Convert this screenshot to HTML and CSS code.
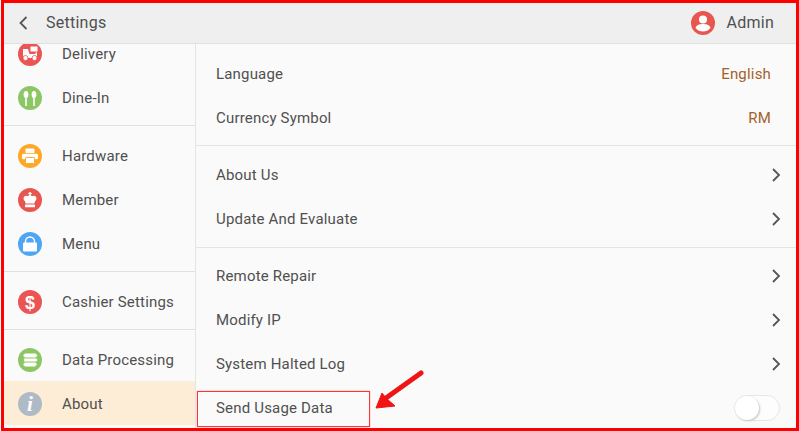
FILE: index.html

```html
<!DOCTYPE html>
<html lang="en">
<head>
    <meta charset="UTF-8">
    <meta name="viewport" content="width=device-width, initial-scale=1.0">
    <title>Settings</title>
    <link rel="stylesheet" href="styles.css">
</head>
<body>
    <div class="app">
        <header class="topbar">
            <svg class="back" width="12" height="16" viewBox="0 0 12 16"><path d="M9.5 2 L3.5 8 L9.5 14" fill="none" stroke="#555" stroke-width="1.8"/></svg>
            <span class="title">Settings</span>
            <svg class="user" width="24" height="24" viewBox="0 0 24 24">
                <circle cx="12" cy="12" r="12" fill="#e8574f"/>
                <circle cx="12" cy="8.5" r="4" fill="#fff"/>
                <path d="M4.5 17 C5.5 13.5 9 13 12 13 C15 13 18.5 13.5 19.5 17 C17.5 19.5 15 20.5 12 20.5 C9 20.5 6.5 19.5 4.5 17 Z" fill="#fff"/>
            </svg>
            <span class="username">Admin</span>
        </header>

        <div class="columns">
            <nav class="sidebar">
                <div class="nav-scroll">
                    <div class="nav-group first">
                        <div class="nav-row">
                            <svg class="icon" viewBox="0 0 24 24"><circle cx="12" cy="12" r="12" fill="#ea5455"/><rect x="12.500" y="4.500" width="7" height="5" fill="#fff"/><path d="M5 7 h5 l1.500 5 h6 V10.500 h1.500 V16 H5 Z" fill="#fff"/><circle cx="7.500" cy="16" r="2.500" fill="#fff" stroke="#ea5455" stroke-width="0.800"/><circle cx="16.500" cy="16" r="2.500" fill="#fff" stroke="#ea5455" stroke-width="0.800"/></svg>
                            <span>Delivery</span>
                        </div>
                        <div class="nav-row">
                            <svg class="icon" viewBox="0 0 24 24"><circle cx="12" cy="12" r="12" fill="#8cc665"/><ellipse cx="8" cy="8.500" rx="2.400" ry="3.500" fill="#fff"/><rect x="7.200" y="10" width="1.600" height="10" fill="#fff"/><ellipse cx="16" cy="8.500" rx="2.400" ry="3.500" fill="#fff"/><rect x="15.200" y="10" width="1.600" height="10" fill="#fff"/></svg>
                            <span>Dine-In</span>
                        </div>
                    </div>
                    <div class="nav-group">
                        <div class="nav-row">
                            <svg class="icon" viewBox="0 0 24 24"><circle cx="12" cy="12" r="12" fill="#ffa726"/><rect x="7.500" y="4.500" width="9" height="4.500" rx="0.800" fill="#fff"/><rect x="4" y="9.800" width="16" height="5.500" rx="1.500" fill="#fff"/><rect x="7.500" y="13.500" width="9" height="6" rx="0.800" fill="#fff" stroke="#ffa726" stroke-width="1"/></svg>
                            <span>Hardware</span>
                        </div>
                        <div class="nav-row">
                            <svg class="icon" viewBox="0 0 24 24"><circle cx="12" cy="12" r="12" fill="#e8574f"/><rect x="11.300" y="4" width="1.400" height="4" fill="#fff"/><rect x="10.200" y="4.900" width="3.600" height="1.200" fill="#fff"/><circle cx="8.300" cy="10.500" r="2.700" fill="#fff"/><circle cx="15.700" cy="10.500" r="2.700" fill="#fff"/><circle cx="12" cy="9.800" r="2.500" fill="#fff"/><path d="M6.500 11.500 H17.500 L16.300 15.500 H7.700 Z" fill="#fff"/><rect x="7" y="16.500" width="10" height="2.800" rx="0.500" fill="#fff"/></svg>
                            <span>Member</span>
                        </div>
                        <div class="nav-row">
                            <svg class="icon" viewBox="0 0 24 24"><circle cx="12" cy="12" r="12" fill="#4fa5f2"/><rect x="5" y="10.500" width="14" height="9" rx="1.200" fill="#fff"/><path d="M7.500 11 V9.500 a4.500 4.500 0 0 1 9 0 V11" fill="none" stroke="#fff" stroke-width="1.400"/></svg>
                            <span>Menu</span>
                        </div>
                    </div>
                    <div class="nav-group">
                        <div class="nav-row">
                            <svg class="icon" viewBox="0 0 24 24"><circle cx="12" cy="12" r="12" fill="#ea5455"/><text x="12" y="18.500" class="icon-char">$</text></svg>
                            <span>Cashier Settings</span>
                        </div>
                    </div>
                    <div class="nav-group last">
                        <div class="nav-row">
                            <svg class="icon" viewBox="0 0 24 24"><circle cx="12" cy="12" r="12" fill="#8cc665"/><path d="M7 5.500 H17.500 L19.500 7.500 L17.500 9.500 H7 L5 7.500 Z M5.500 10.500 H18.500 L19.500 12 L18.500 13.500 H5.500 L6.500 12 Z M7 14.500 H17.500 L19 16.500 L17 18.500 H7 L5 16.500 Z" fill="#fff"/></svg>
                            <span>Data Processing</span>
                        </div>
                        <div class="nav-row active">
                            <svg class="icon" viewBox="0 0 24 24"><circle cx="12" cy="12" r="12" fill="#aebbc6"/><text x="12" y="19" class="icon-info">i</text></svg>
                            <span>About</span>
                        </div>
                    </div>
                </div>
            </nav>

            <main class="panel">
                <section class="group">
                    <div class="row"><span>Language</span><span class="value">English</span></div>
                    <div class="row"><span>Currency Symbol</span><span class="value">RM</span></div>
                </section>
                <section class="group">
                    <div class="row"><span>About Us</span><svg class="chev" viewBox="0 0 10 16"><path d="M2 2 L8 8 L2 14" /></svg></div>
                    <div class="row"><span>Update And Evaluate</span><svg class="chev" viewBox="0 0 10 16"><path d="M2 2 L8 8 L2 14" /></svg></div>
                </section>
                <section class="group">
                    <div class="row"><span>Remote Repair</span><svg class="chev" viewBox="0 0 10 16"><path d="M2 2 L8 8 L2 14" /></svg></div>
                    <div class="row"><span>Modify IP</span><svg class="chev" viewBox="0 0 10 16"><path d="M2 2 L8 8 L2 14" /></svg></div>
                    <div class="row"><span>System Halted Log</span><svg class="chev" viewBox="0 0 10 16"><path d="M2 2 L8 8 L2 14" /></svg></div>
                    <div class="row"><span>Send Usage Data</span><span class="toggle"><span class="knob"></span></span></div>
                </section>
            </main>
        </div>
    </div>

    <!-- annotations on top of the screenshot -->
    <div class="frame"></div>
    <div class="callout"></div>
    <svg class="arrow" width="56" height="50" viewBox="0 0 56 50"><path d="M50 8 L15 33" fill="none" stroke="#f01414" stroke-width="5" stroke-linecap="round"/><path d="M5 43 L11 28 L15 33 L24 41 Z" fill="#f01414" stroke="#f01414" stroke-width="1" stroke-linejoin="round"/></svg>
</body>
</html>
```

FILE: styles.css

```css
body {
    margin: 0;
    width: 799px;
    height: 431px;
    overflow: hidden;
    position: relative;
    background-color: #fff;
    font-family: 'Roboto', sans-serif;
    font-size: 15px;
    letter-spacing: 0.18px;
    color: #505050;
}

.app {
    margin: 3px 3px 0 3px;
    height: 425px;
    width: 793px;
    overflow: hidden;
    background-color: #fafafa;
}

.topbar {
    display: flex;
    align-items: center;
    height: 39px;
    padding-right: 22px;
    padding-bottom: 1px;
    background-color: #efefef;
    border-bottom: 1.5px solid #e0e0e0;
}

.back {
    margin-left: 14px;
}

.title {
    margin-left: 17px;
    font-size: 16px;
    letter-spacing: 0.25px;
    flex: 1;
}

.user {
    margin-right: 12px;
}

.username {
    font-size: 16px;
    letter-spacing: 0.25px;
}

.columns {
    display: flex;
    height: 384px;
}

.sidebar {
    width: 192px;
    flex-shrink: 0;
    overflow: hidden;
    border-right: 1.5px solid #e4e4e4;
}

.nav-scroll {
    margin-top: -12px;
}

.nav-group {
    padding: 8px 0 5px;
    border-bottom: 1.5px solid #e0e0e0;
}

.nav-group.first {
    padding-top: 0;
}

.nav-group.last {
    border-bottom: none;
}

.nav-row {
    display: flex;
    align-items: center;
    height: 44px;
    padding-left: 15px;
}

.nav-row.active {
    box-sizing: border-box;
    margin-top: -1px;
    padding-top: 2px;
    background-color: #fdecd6;
}

.icon {
    width: 24px;
    height: 24px;
    margin-right: 20px;
}

.icon-char {
    font-family: 'Liberation Sans', sans-serif;
    font-size: 18px;
    font-weight: bold;
    fill: #fff;
    text-anchor: middle;
}

.icon-info {
    font-family: 'Liberation Serif', serif;
    font-size: 21px;
    font-weight: bold;
    font-style: italic;
    fill: #fff;
    text-anchor: middle;
}

.panel {
    flex: 1;
    overflow: hidden;
}

.group {
    padding: 8px 0 5px;
    border-bottom: 1.5px solid #e4e4e4;
}

.group:nth-child(2) {
    padding: 7px 0 6px;
}

.group:last-child {
    padding-top: 6px;
    border-bottom: none;
}

.row {
    display: flex;
    align-items: center;
    justify-content: space-between;
    height: 44px;
    padding: 0 16px 0 20px;
}

.value {
    color: #a5612a;
    margin-right: 9px;
}

.chev {
    width: 10px;
    height: 16px;
    margin-right: -1px;
}

.chev path {
    fill: none;
    stroke: #555;
    stroke-width: 1.8;
}

.toggle {
    display: block;
    width: 46px;
    height: 26px;
    box-sizing: border-box;
    border: 1px solid #e6e6e6;
    border-radius: 13px;
    background-color: #fdfdfd;
}

.knob {
    display: block;
    width: 24px;
    height: 24px;
    border-radius: 50%;
    background-color: #fff;
    box-shadow: 1px 1px 2px #c4c4c4;
}

.frame {
    position: absolute;
    left: 1px;
    top: 0;
    width: 792px;
    height: 425px;
    border: 3px solid #f00;
    pointer-events: none;
}

.callout {
    position: absolute;
    left: 197px;
    top: 391px;
    width: 171px;
    height: 34px;
    border: 1px solid #f33;
    box-shadow: 0 0 1px #f66;
}

.arrow {
    position: absolute;
    left: 371px;
    top: 365px;
}
```
